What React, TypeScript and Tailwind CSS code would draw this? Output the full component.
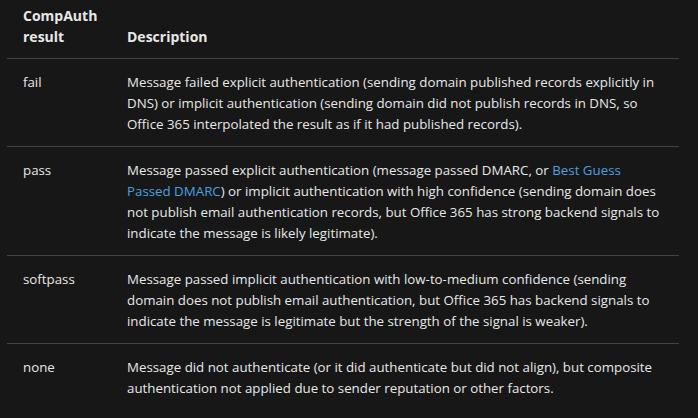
const rows: { result: string; lines: React.ReactNode[] }[] = [
  {
    result: "fail",
    lines: [
      "Message failed explicit authentication (sending domain published records explicitly in",
      "DNS) or implicit authentication (sending domain did not publish records in DNS, so",
      "Office 365 interpolated the result as if it had published records).",
    ],
  },
  {
    result: "pass",
    lines: [
      <>
        Message passed explicit authentication (message passed DMARC, or{" "}
        <a className="text-[#4ca0e0]">Best Guess</a>
      </>,
      <>
        <a className="text-[#4ca0e0]">Passed DMARC</a>) or implicit authentication with high
        confidence (sending domain does
      </>,
      "not publish email authentication records, but Office 365 has strong backend signals to",
      "indicate the message is likely legitimate).",
    ],
  },
  {
    result: "softpass",
    lines: [
      "Message passed implicit authentication with low-to-medium confidence (sending",
      "domain does not publish email authentication, but Office 365 has backend signals to",
      "indicate the message is legitimate but the strength of the signal is weaker).",
    ],
  },
  {
    result: "none",
    lines: [
      "Message did not authenticate (or it did authenticate but did not align), but composite",
      "authentication not applied due to sender reputation or other factors.",
    ],
  },
];

export default function App() {
  return (
    <div
      className="min-h-[418px] w-full bg-[#171717] text-[#e8e8e8] text-[13.3px] leading-[21px]"
      style={{ fontFamily: '"Open Sans", "Noto Sans", sans-serif' }}
    >
      <div className="pl-[7px] pr-[19px]">
        <table className="w-full table-fixed border-collapse">
          <thead>
            <tr className="border-b border-[#444]">
              <th className="w-[104px] pl-4 pt-[6px] pb-[11px] text-left align-bottom text-[14px] leading-[20.5px] font-bold">
                CompAuth
                <br />
                result
              </th>
              <th className="pl-4 pt-[6px] pb-[11px] text-left align-bottom text-[14px] leading-[20.5px] font-bold">
                Description
              </th>
            </tr>
          </thead>
          <tbody>
            {rows.map((r, i) => (
              <tr
                key={r.result}
                className={i < rows.length - 1 ? "border-b border-[#444]" : ""}
              >
                <td className="pl-4 pt-[13px] pb-[11px] align-top">{r.result}</td>
                <td className="pl-4 pt-[13px] pb-[11px] align-top whitespace-nowrap">
                  {r.lines.map((l, j) => (
                    <div key={j}>{l}</div>
                  ))}
                </td>
              </tr>
            ))}
          </tbody>
        </table>
      </div>
    </div>
  );
}
